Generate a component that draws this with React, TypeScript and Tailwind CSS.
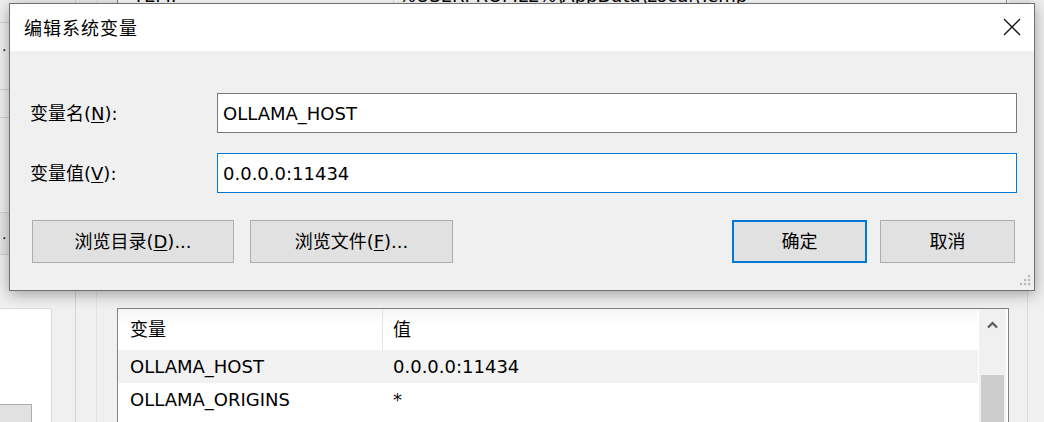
import React from "react";

function CloseIcon() {
  return (
    <svg width="18" height="18" viewBox="0 0 18 18" fill="none">
      <path d="M1 1 L17 17 M17 1 L1 17" stroke="#111" strokeWidth="1.3" />
    </svg>
  );
}

function Grip() {
  const dots = [
    [9, 0],
    [5, 4],
    [9, 4],
    [1, 8],
    [5, 8],
    [9, 8],
  ];
  return (
    <svg width="12" height="11" viewBox="0 0 12 11">
      {dots.map(([x, y], i) => (
        <rect key={i} x={x} y={y} width="2.2" height="2.2" fill="#b9b9b9" />
      ))}
    </svg>
  );
}

function Chevron() {
  return (
    <svg width="11" height="8" viewBox="0 0 11 8" fill="none">
      <path d="M1 6.5 L5.5 2 L10 6.5" stroke="#5a5a5a" strokeWidth="2.2" />
    </svg>
  );
}

export default function App() {
  return (
    <div className="relative w-[1044px] h-[422px] overflow-hidden bg-[#f0f0f0] text-black font-[family-name:DejaVu_Sans,Noto_Sans_CJK_SC,sans-serif]">
      {/* background window */}
      <div className="flex h-full">
        {/* left columns */}
        <div className="flex w-[117px] shrink-0">
          <div className="flex w-[52px] flex-col">
            <div className="h-[23px] border-b border-[#d2d2d2]" />
            <div className="flex h-[45px] items-center pl-[2px] text-[14px] leading-none">.</div>
            <div className="h-[22px] border-b border-[#d2d2d2]" />
            <div className="h-[28px] border-b border-[#d2d2d2]" />
            <div className="h-[95px] border-b border-[#d2d2d2]" />
            <div className="flex h-[42px] items-center border-b border-[#d2d2d2] bg-[#e6e6e6] pl-[2px] text-[14px] leading-none">
              .
            </div>
            <div className="flex-1" />
            <div className="flex h-[114px] flex-col border-r border-t border-[#dcdcdc] bg-white">
              <div className="flex-1" />
              <div className="h-[18px] w-[32px] border-r border-t border-[#adadad] bg-[#e1e1e1]" />
            </div>
          </div>
          <div className="w-[24px] border-r border-[#d4d4d4]" />
          <div className="w-[21px] border-r border-[#e2e2e2]" />
          <div className="flex-1" />
        </div>

        {/* lists column */}
        <div className="flex w-[892px] shrink-0 flex-col">
          <div className="h-[4px] overflow-hidden bg-white border-l border-[#828282]">
            <div className="-mt-[15px] flex h-[22px] items-center text-[18px] leading-none">
              <div className="w-[275px] shrink-0 pl-[15px]">TEMP</div>
              <div className="h-full w-px bg-[#e5e5e5]" />
              <div className="pl-[5px]">%USERPROFILE%\AppData\Local\Temp</div>
              <div className="flex-1" />
              <div className="h-full w-px bg-[#9a9a9a]" />
              <div className="h-full w-[2px]" />
            </div>
          </div>
          <div className="flex-1" />
          {/* system variables list */}
          <div className="flex h-[114px] border border-b-0 border-[#828282] bg-white">
            <div className="flex w-[860px] flex-col">
              <div className="flex h-[41px] items-center bg-gradient-to-b from-[#f6f6f6] to-white to-40% text-[18px]">
                <div className="flex h-full w-[265px] items-center border-r border-[#e5e5e5] pl-[12px]">变量</div>
                <div className="pl-[10px]">值</div>
              </div>
              <div className="flex h-[33px] items-center bg-[#f2f2f2] text-[18px]">
                <div className="w-[265px] pl-[12px]">OLLAMA_HOST</div>
                <div className="pl-[10px]">0.0.0.0:11434</div>
              </div>
              <div className="flex h-[32px] items-center text-[18px]">
                <div className="w-[265px] pl-[12px]">OLLAMA_ORIGINS</div>
                <div className="pl-[10px]">*</div>
              </div>
            </div>
            <div className="ml-px flex w-[27px] flex-col bg-[#f0f0f0]">
              <div className="flex h-[30px] items-center justify-center pt-[2px]">
                <Chevron />
              </div>
              <div className="h-[36px]" />
              <div className="mx-[2px] flex-1 bg-[#cdcdcd]" />
            </div>
          </div>
        </div>

        {/* right strip */}
        <div className="flex flex-1">
          <div className="w-[18px]" />
          <div className="w-px bg-[#dadada]" />
        </div>
      </div>

      {/* dialog */}
      <div className="absolute left-[9px] top-[3px] flex h-[288px] w-[1026px] flex-col border border-[#707070] bg-[#f0f0f0] shadow-[0_3px_14px_rgba(0,0,0,0.35)]">
        <div className="flex h-[47px] shrink-0 items-center justify-between bg-white">
          <div className="pl-[14px] pt-[2px] text-[18px] tracking-[1px]">编辑系统变量</div>
          <div className="flex h-full w-[44px] items-center justify-center pb-[2px]">
            <CloseIcon />
          </div>
        </div>

        <div className="relative flex flex-1 flex-col pl-[20px] pr-[17px] pt-[42px] text-[18px]">
          <div className="flex h-[40px] items-center">
            <div className="w-[187px]">
              变量名(<u className="underline-offset-2">N</u>):
            </div>
            <div className="flex h-full flex-1 items-center border border-[#7a7a7a] bg-white pl-[5px]">OLLAMA_HOST</div>
          </div>
          <div className="mt-[20px] flex h-[40px] items-center">
            <div className="w-[187px]">
              变量值(<u className="underline-offset-2">V</u>):
            </div>
            <div className="flex h-full flex-1 items-center border border-[#0078d7] bg-white pl-[5px]">0.0.0.0:11434</div>
          </div>

          <div className="mt-[27px] flex h-[43px] pl-[2px] pr-[2px]">
            <div className="flex w-[202px] items-center justify-center border border-[#adadad] bg-[#e1e1e1]">
              浏览目录(<u className="underline-offset-2">D</u>)...
            </div>
            <div className="ml-[16px] flex w-[203px] items-center justify-center border border-[#adadad] bg-[#e1e1e1]">
              浏览文件(<u className="underline-offset-2">F</u>)...
            </div>
            <div className="flex-1" />
            <div className="flex w-[135px] items-center justify-center border-2 border-[#0078d7] bg-[#e1e1e1]">确定</div>
            <div className="ml-[13px] flex w-[135px] items-center justify-center border border-[#adadad] bg-[#e1e1e1]">取消</div>
          </div>

          <div className="absolute bottom-[4px] right-[3px]">
            <Grip />
          </div>
        </div>
      </div>
    </div>
  );
}
